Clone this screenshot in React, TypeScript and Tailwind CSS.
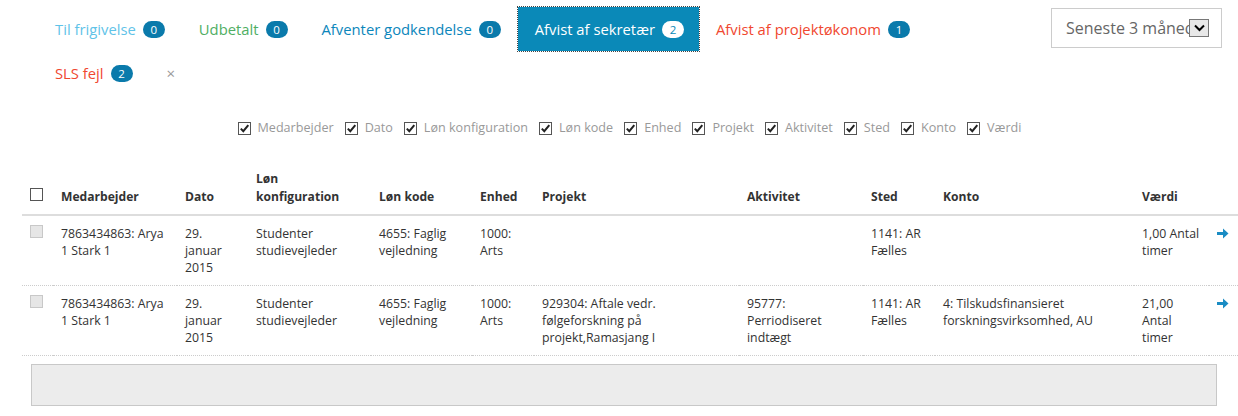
import React from 'react';

interface Tab {
    label: string;
    count?: number;
    color: string;
    active?: boolean;
}

const tabs: Tab[] = [
    { label: 'Til frigivelse', count: 0, color: 'text-[#5fc3e8]' },
    { label: 'Udbetalt', count: 0, color: 'text-[#4fae63]' },
    { label: 'Afventer godkendelse', count: 0, color: 'text-[#0b86bb]' },
    { label: 'Afvist af sekretær', count: 2, color: 'text-white', active: true },
    { label: 'Afvist af projektøkonom', count: 1, color: 'text-[#f0472f]' },
    { label: 'SLS fejl', count: 2, color: 'text-[#f0472f]' },
];

const columns = ['Medarbejder', 'Dato', 'Løn konfiguration', 'Løn kode', 'Enhed', 'Projekt', 'Aktivitet', 'Sted', 'Konto', 'Værdi'];

const rows = [
    {
        employee: '7863434863: Arya 1 Stark 1',
        date: '29. januar 2015',
        config: 'Studenter studievejleder',
        code: '4655: Faglig vejledning',
        unit: '1000: Arts',
        project: '',
        activity: '',
        place: '1141: AR Fælles',
        account: '',
        value: '1,00 Antal timer',
    },
    {
        employee: '7863434863: Arya 1 Stark 1',
        date: '29. januar 2015',
        config: 'Studenter studievejleder',
        code: '4655: Faglig vejledning',
        unit: '1000: Arts',
        project: '929304: Aftale vedr. følgeforskning på projekt,Ramasjang I',
        activity: '95777: Perriodiseret indtægt',
        place: '1141: AR Fælles',
        account: '4: Tilskudsfinansieret forskningsvirksomhed, AU',
        value: '21,00 Antal timer',
    },
];

const CheckIcon = () => (
    <svg width="13" height="13" viewBox="0 0 13 13" className="shrink-0">
        <rect x="0.5" y="0.5" width="12" height="12" fill="#fff" stroke="#555" />
        <path d="M2.8 6.6 L5.3 9.2 L10.3 3.2" fill="none" stroke="#222" strokeWidth="2" />
    </svg>
);

const ArrowIcon = () => (
    <svg width="12" height="11" viewBox="0 0 12 11">
        <path d="M0 4 H6 V0.5 L11.5 5.5 L6 10.5 V7 H0 Z" fill="#1a8cc4" />
    </svg>
);

export default function App() {
    return (
        <div className="w-[1238px] h-[416px] bg-white overflow-hidden text-[#333] font-['Open_Sans',_'Liberation_Sans',_sans-serif]">
            {/* top: tabs + period select */}
            <div className="flex items-start pt-[7px]">
                <div className="flex flex-wrap w-[1000px] pl-[38px]">
                    {tabs.map((tab) => (
                        <div
                            key={tab.label}
                            className={`h-[44px] flex items-center px-[17px] text-[14.8px] ${tab.color} ${tab.active ? 'bg-[#0a89b8] outline-1 outline-dotted outline-[#444] pr-[15px]' : ''}`}
                        >
                            <span>{tab.label}</span>
                            <span
                                className={`ml-[7px] h-[17px] min-w-[22px] px-[6px] rounded-full text-[11.5px] leading-[17px] text-center ${tab.active ? 'bg-white text-[#0a89b8]' : 'bg-[#0a7aab] text-white'}`}
                            >
                                {tab.count}
                            </span>
                        </div>
                    ))}
                    <div className="h-[44px] flex items-center px-[17px] text-[15px] text-[#999]">×</div>
                </div>
                <div className="ml-auto mr-[16px] mt-[1px] w-[171px] h-[40px] border border-[#ccc] flex items-center pl-[14px] pr-[12px]">
                    <div className="w-[123px] overflow-hidden whitespace-nowrap text-[16px] text-[#666]">Seneste 3 måneder</div>
                    <div className="w-[20px] h-[18px] border border-[#777] bg-[#e8e8e8] flex items-center justify-center">
                        <svg width="11" height="8" viewBox="0 0 11 8">
                            <path d="M1 1.5 L5.5 6 L10 1.5" fill="none" stroke="#000" strokeWidth="2" />
                        </svg>
                    </div>
                </div>
            </div>

            {/* column toggles */}
            <div className="mt-[24px] pl-[32px] flex justify-center">
                <div className="flex items-center h-[18px] text-[12.6px] text-[#999]">
                    {columns.map((c) => (
                        <label key={c} className="flex items-center gap-[7px] mr-[11px]">
                            <CheckIcon />
                            <span>{c}</span>
                        </label>
                    ))}
                </div>
            </div>

            {/* table */}
            <div className="mt-[24px] pl-[22px]">
                <table className="w-[1216px] table-fixed border-collapse text-[12.3px] leading-[17px]">
                    <colgroup>
                        <col className="w-[31px]" />
                        <col className="w-[124px]" />
                        <col className="w-[71px]" />
                        <col className="w-[123px]" />
                        <col className="w-[101px]" />
                        <col className="w-[62px]" />
                        <col className="w-[205px]" />
                        <col className="w-[124px]" />
                        <col className="w-[72px]" />
                        <col className="w-[199px]" />
                        <col className="w-[75px]" />
                        <col className="w-[29px]" />
                    </colgroup>
                    <thead>
                        <tr className="border-b-2 border-[#ddd]">
                            <th className="px-[8px] pt-[9px] pb-[13px] align-bottom text-left">
                                <div className="w-[13px] h-[13px] border border-[#555] bg-white"></div>
                            </th>
                            {columns.map((c) => (
                                <th key={c} className="px-[8px] pt-[9px] pb-[9px] align-bottom text-left font-bold text-[12.1px] leading-[17.5px]">
                                    {c}
                                </th>
                            ))}
                            <th></th>
                        </tr>
                    </thead>
                    <tbody>
                        {rows.map((r, i) => (
                            <tr key={i} className="border-b border-dotted border-[#ccc] align-top">
                                <td className="px-[8px] pt-[9px] pb-[9px]">
                                    <div className="w-[13px] h-[13px] border border-[#c8c8c8] bg-[#e6e6e6]"></div>
                                </td>
                                <td className="px-[8px] py-[9px]">{r.employee}</td>
                                <td className="px-[8px] py-[9px]">{r.date}</td>
                                <td className="px-[8px] py-[9px]">{r.config}</td>
                                <td className="px-[8px] py-[9px]">{r.code}</td>
                                <td className="px-[8px] py-[9px]">{r.unit}</td>
                                <td className="px-[8px] py-[9px]">{r.project}</td>
                                <td className="px-[8px] py-[9px]">{r.activity}</td>
                                <td className="px-[8px] py-[9px]">{r.place}</td>
                                <td className="px-[8px] py-[9px]">{r.account}</td>
                                <td className="px-[8px] py-[9px]">{r.value}</td>
                                <td className="pl-[8px] pt-[12px]">
                                    <ArrowIcon />
                                </td>
                            </tr>
                        ))}
                    </tbody>
                </table>
                <div className="mt-[8px] ml-[9px] w-[1186px] h-[42px] bg-[#ececec] border border-[#c8c8c8]"></div>
            </div>
        </div>
    );
}
